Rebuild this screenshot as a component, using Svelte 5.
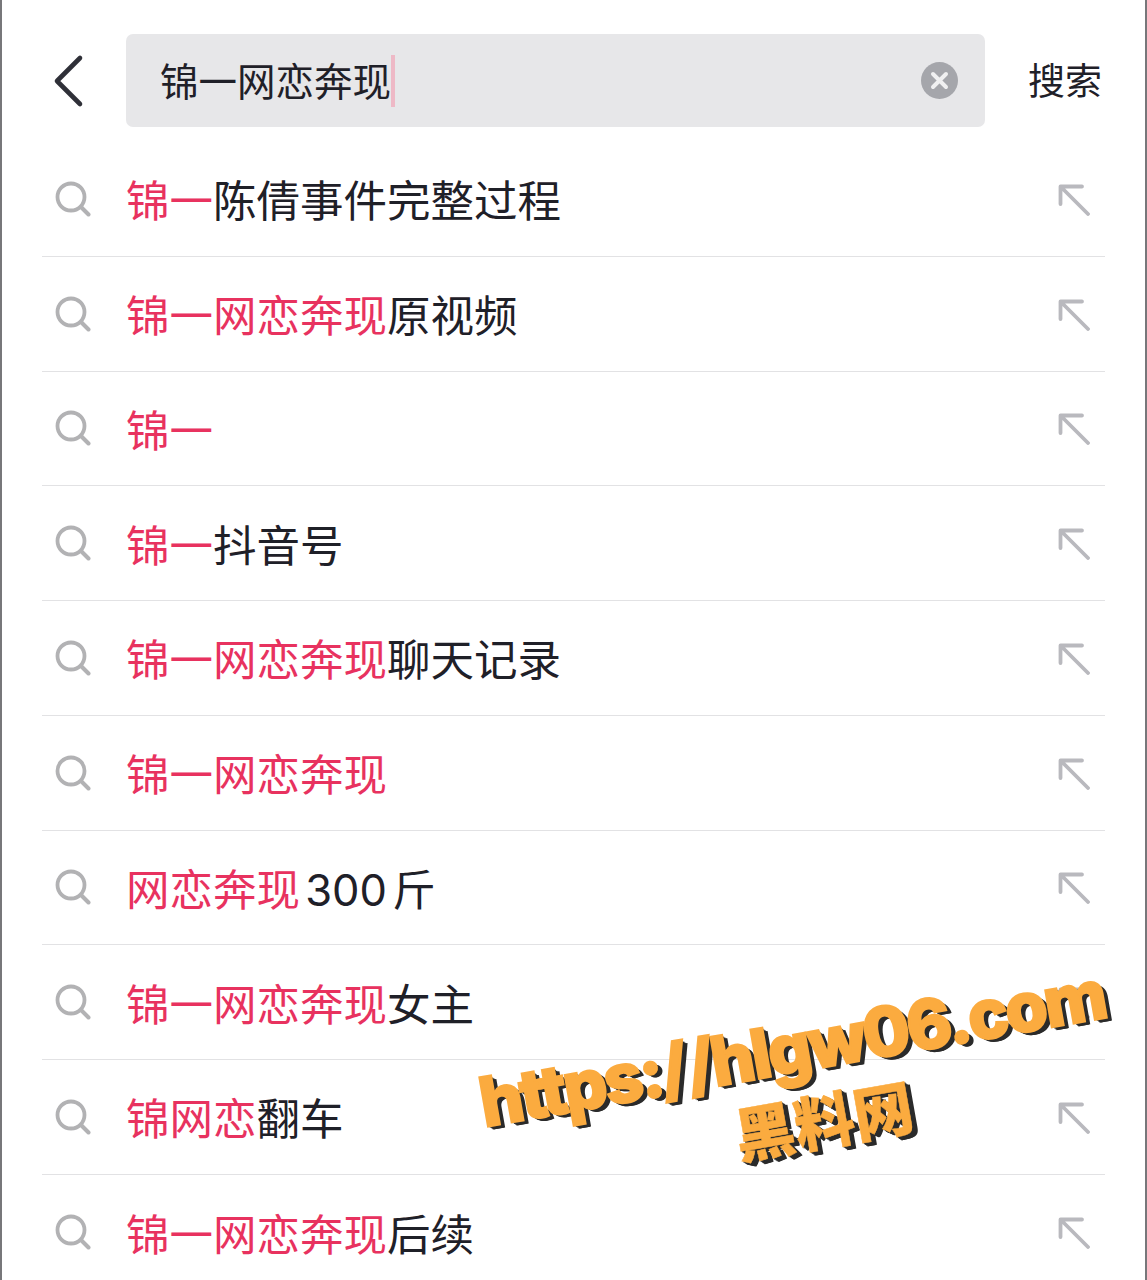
<script lang="ts">
	// each row: [highlighted part, plain part]
	const rows: [string, string][] = [
		['锦一', '陈倩事件完整过程'],
		['锦一网恋奔现', '原视频'],
		['锦一', ''],
		['锦一', '抖音号'],
		['锦一网恋奔现', '聊天记录'],
		['锦一网恋奔现', ''],
		['网恋奔现', ' 300 斤'],
		['锦一网恋奔现', '女主'],
		['锦网恋', '翻车'],
		['锦一网恋奔现', '后续']
	];
</script>

<div class="screen">
	<header>
		<button class="back" aria-label="返回">
			<svg width="34" height="54" viewBox="0 0 34 54">
				<path d="M28 4 L5 27 L28 50" fill="none" stroke="#2f3038" stroke-width="4.6" stroke-linecap="round" stroke-linejoin="round" />
			</svg>
		</button>
		<div class="field">
			<span class="value">锦一网恋奔现</span><span class="caret"></span>
			<svg class="clear" width="37" height="37" viewBox="0 0 37 37">
				<circle cx="18.5" cy="18.5" r="18.5" fill="#a5a6ab" />
				<path d="M12 12 L25 25 M25 12 L12 25" stroke="#f0f0f1" stroke-width="4" stroke-linecap="round" />
			</svg>
		</div>
		<span class="submit">搜索</span>
	</header>

	<ul>
		{#each rows as [hit, rest]}
			<li>
				<svg class="glass" width="36" height="36" viewBox="0 0 36 36">
					<circle cx="16" cy="16" r="13.5" fill="none" stroke="#b2b2b4" stroke-width="3.8" />
					<path d="M26 26 L33.5 33.5" stroke="#b2b2b4" stroke-width="4" stroke-linecap="round" />
				</svg>
				<span class="label"><em>{hit}</em>{rest}</span>
				<svg class="fill-in" width="32" height="32" viewBox="0 0 32 32">
					<path d="M2.5 20 V2.5 H24 M3.5 3.5 L30 30" fill="none" stroke="#b9b9be" stroke-width="3.8" stroke-linecap="round" stroke-linejoin="round" />
				</svg>
			</li>
		{/each}
	</ul>

	<div class="watermark">
		<div>https:/ /hlgw06.com</div>
		<div class="cn">黑料网</div>
	</div>
</div>

<style>
	:global(body) {
		margin: 0;
		background: #fff;
	}
	.screen {
		position: relative;
		box-sizing: border-box;
		width: 1147px;
		height: 1280px;
		overflow: hidden;
		background: #fff;
		border-left: 2px solid #77777a;
		border-right: 2px solid #77777a;
		font-family: Inter, 'Noto Sans CJK SC', sans-serif;
		color: #1f2028;
	}
	header {
		display: flex;
		align-items: center;
		height: 142px;
		padding: 19px 43px 0 50px;
		box-sizing: border-box;
	}
	.back {
		width: 74px;
		padding: 0;
		border: 0;
		background: none;
		text-align: left;
		line-height: 0;
	}
	.field {
		display: flex;
		align-items: center;
		width: 859px;
		height: 93px;
		padding: 0 27px 0 34px;
		box-sizing: border-box;
		border-radius: 7px;
		background: #e7e7e9;
		font-size: 38.5px;
	}
	.value {
		position: relative;
		top: -2px;
	}
	.caret {
		width: 4px;
		height: 52px;
		background: #eeb9c6;
	}
	.clear {
		margin-left: auto;
	}
	.submit {
		position: relative;
		top: -2px;
		margin-left: auto;
		font-size: 37px;
	}
	ul {
		list-style: none;
		margin: 0;
		padding: 0 40px;
	}
	li {
		display: flex;
		align-items: center;
		height: 114.75px;
		box-sizing: border-box;
		border-bottom: 1.5px solid #e2e2e4;
	}
	li:last-child {
		border-bottom: 0;
	}
	.glass {
		margin-left: 13px;
	}
	.label {
		margin-left: 35px;
		font-size: 43.5px;
		word-spacing: -7px;
		white-space: pre;
	}
	em {
		font-style: normal;
		color: #e8325f;
	}
	.fill-in {
		margin-left: auto;
		margin-right: 15px;
		margin-top: 2px;
	}
	/* stamped over the list, so it sits on top of the rows */
	.watermark {
		position: absolute;
		left: 476px;
		top: 1008px;
		width: 640px;
		text-align: center;
		transform: rotate(-10deg);
		font-family: Inter, 'Noto Sans CJK SC', sans-serif;
		font-weight: 800;
		font-size: 68px;
		line-height: 78px;
		letter-spacing: -2.6px;
		word-spacing: -10px;
		white-space: nowrap;
		color: #fbab3f;
		-webkit-text-stroke: 2.5px #fbab3f;
		text-shadow:
			1px 1px 0 #2b2b2b,
			2px 2px 0 #2b2b2b,
			3px 3px 0 #2b2b2b,
			4px 4px 0 #2b2b2b,
			5px 4px 0 #2b2b2b;
	}
	.cn {
		padding-left: 38px;
		font-family: 'Noto Sans CJK SC', sans-serif;
		font-weight: 900;
		font-size: 60px;
		line-height: 72px;
		letter-spacing: 0;
		-webkit-text-stroke: 0.5px #fbab3f;
	}
</style>
